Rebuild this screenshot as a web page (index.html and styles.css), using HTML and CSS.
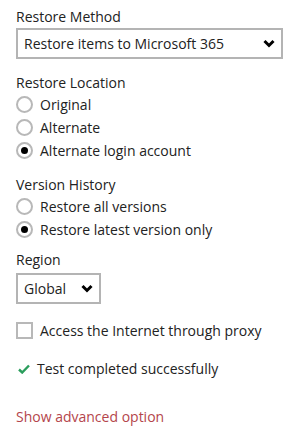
FILE: index.html
```html
<!DOCTYPE html>
<html>
<head>
<meta charset="utf-8">
<link rel="stylesheet" href="styles.css">
</head>
<body>
<div class="panel">
  <div class="label first">Restore Method</div>
  <div class="select wide">
    <span>Restore items to Microsoft 365</span>
    <svg class="chev" width="12" height="9" viewBox="0 0 12 9"><path d="M1.5 2 L6 6.5 L10.5 2" fill="none" stroke="#000" stroke-width="3"/></svg>
  </div>

  <div class="label loc">Restore Location</div>
  <div class="row"><span class="radio"></span><span>Original</span></div>
  <div class="row"><span class="radio"></span><span>Alternate</span></div>
  <div class="row"><span class="radio on"></span><span>Alternate login account</span></div>

  <div class="label ver">Version History</div>
  <div class="row"><span class="radio"></span><span>Restore all versions</span></div>
  <div class="row"><span class="radio on"></span><span>Restore latest version only</span></div>

  <div class="label reg">Region</div>
  <div class="select narrow">
    <span>Global</span>
    <svg class="chev" width="12" height="9" viewBox="0 0 12 9"><path d="M1.5 2 L6 6.5 L10.5 2" fill="none" stroke="#000" stroke-width="3"/></svg>
  </div>

  <div class="row proxy"><span class="box"></span><span>Access the Internet through proxy</span></div>

  <div class="row test">
    <svg class="tick" width="12" height="10" viewBox="0 0 12 10"><path d="M1 5.5 L4.2 8.5 L11 1.5" fill="none" stroke="#2a9d5c" stroke-width="2.4"/></svg>
    <span>Test completed successfully</span>
  </div>

  <div class="link">Show advanced option</div>
</div>
</body>
</html>
```
FILE: styles.css
```css
html, body {
  margin: 0;
  padding: 0;
  background: #fff;
}
.panel {
  display: flex;
  flex-direction: column;
  align-items: flex-start;
  padding: 7px 0 0 16px;
  font-family: "Open Sans", sans-serif;
  font-size: 14px;
  color: #222;
}
.label {
  line-height: 20px;
}
.loc { margin-top: 14px; }
.ver { margin-top: 13px; }
.reg { margin-top: 9px; }
.select {
  box-sizing: border-box;
  height: 31px;
  border: 2px solid #b4b4b4;
  display: flex;
  align-items: center;
  justify-content: space-between;
  padding: 0 6px 0 6px;
  margin-top: 1px;
}
.select.wide { width: 267px; }
.select.narrow { width: 85px; margin-top: 3px; }
.chev { display: block; }
.row {
  display: flex;
  align-items: center;
  gap: 7px;
  height: 23px;
}
.radio {
  box-sizing: border-box;
  width: 17px;
  height: 17px;
  border: 2px solid #b8b8b8;
  border-radius: 50%;
  display: flex;
  align-items: center;
  justify-content: center;
}
.radio.on::after {
  content: "";
  width: 7px;
  height: 7px;
  border-radius: 50%;
  background: #000;
}
.box {
  box-sizing: border-box;
  width: 17px;
  height: 17px;
  border: 2px solid #b8b8b8;
}
.proxy { margin-top: 15px; }
.test { margin-top: 15px; padding-left: 2px; gap: 7px; }
.tick { display: block; }
.link {
  margin-top: 27px;
  line-height: 20px;
  color: #b4454b;
}
```
